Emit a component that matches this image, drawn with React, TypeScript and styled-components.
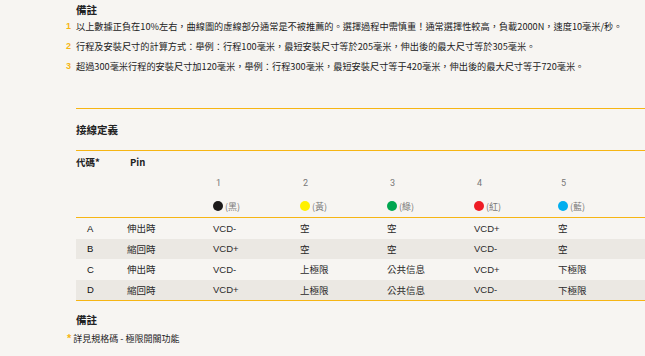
import * as React from "react";
import styled, { createGlobalStyle } from "styled-components";

const ORANGE = "#f6b514";
const CJK = `"Noto Sans CJK TC", "Noto Sans", sans-serif`;

const GlobalStyle = createGlobalStyle`
  html, body {
    margin: 0;
    padding: 0;
    background: #f7f5f2;
  }
  body {
    font-family: ${CJK};
    color: #222;
  }
`;

const Page = styled.div`
  width: 645px;
  height: 356px;
  overflow: hidden;
  padding-left: 76px;
  box-sizing: border-box;
`;

const Title = styled.div<{ $top: number }>`
  margin-top: ${(p) => p.$top}px;
  font-size: 10.5px;
  font-weight: 700;
  line-height: 12px;
  height: 12px;
`;

const NoteList = styled.div`
  margin-left: -10px;
`;

const NoteItem = styled.div`
  display: grid;
  grid-template-columns: 10px auto;
  font-size: 9.2px;
  line-height: 20px;
  height: 20px;
  white-space: nowrap;
`;

const Marker = styled.span`
  color: ${ORANGE};
  font-weight: 700;
  font-family: "Liberation Sans", sans-serif;
  font-size: 9px;
`;

const Divider = styled.div<{ $top?: number }>`
  margin-top: ${(p) => p.$top ?? 0}px;
  height: 1px;
  background: ${ORANGE};
`;

const SectionHead = styled.div`
  height: 41px;
  display: flex;
  align-items: center;
  font-size: 10.5px;
  font-weight: 700;
`;

const Grid = styled.div<{ $h: number; $shade?: boolean }>`
  display: grid;
  grid-template-columns: 11px 40px 86px 87px 87px 87px 84px 1fr;
  height: ${(p) => p.$h}px;
  align-items: center;
  background: ${(p) => (p.$shade ? "#ebe8e3" : "transparent")};
  white-space: nowrap;
`;

const HeadCell = styled.div<{ $shift?: number }>`
  font-size: 9.5px;
  font-weight: 700;
  margin-left: ${(p) => p.$shift ?? 0}px;
`;

const PinNo = styled.div`
  font-family: Roboto, sans-serif;
  font-size: 9px;
  color: #777;
  padding-left: 3px;
`;

const PinColour = styled.div`
  display: flex;
  align-items: center;
  gap: 2px;
  font-size: 9px;
  color: #777;
  padding-top: 2px;
`;

const Dot = styled.span<{ $c: string }>`
  width: 10px;
  height: 10px;
  border-radius: 50%;
  background: ${(p) => p.$c};
  display: inline-block;
`;

const Code = styled.div`
  font-family: "Liberation Sans", Arial, sans-serif;
  font-size: 9.5px;
  color: #111;
`;

const Cell = styled.div<{ $latin?: boolean }>`
  font-family: ${(p) => (p.$latin ? `"Liberation Sans", Arial, sans-serif` : CJK)};
  font-size: ${(p) => (p.$latin ? "9.5px" : "9.5px")};
  color: #2a2a2a;
`;

const FootNote = styled.div`
  margin-top: 6px;
  margin-left: -9px;
  display: flex;
  gap: 2px;
  font-size: 9px;
  line-height: 14px;
  height: 14px;
`;

const Star = styled.span`
  color: ${ORANGE};
  font-family: "Liberation Sans", sans-serif;
  font-size: 11px;
  font-weight: 700;
  position: relative;
  top: -1px;
`;

const notes = [
  "以上數據正負在10%左右，曲線圖的虛線部分通常是不被推薦的。選擇過程中需慎重！通常選擇性較高，負載2000N，速度10毫米/秒。",
  "行程及安裝尺寸的計算方式：舉例：行程100毫米，最短安裝尺寸等於205毫米，伸出後的最大尺寸等於305毫米。",
  "超過300毫米行程的安裝尺寸加120毫米，舉例：行程300毫米，最短安裝尺寸等于420毫米，伸出後的最大尺寸等于720毫米。",
];

const pins = [
  { c: "#1c1a1a", name: "黑" },
  { c: "#fff000", name: "黃" },
  { c: "#00a650", name: "綠" },
  { c: "#ee1c25", name: "紅" },
  { c: "#00aeef", name: "藍" },
];

const rows = [
  ["A", "伸出時", "VCD-", "空", "空", "VCD+", "空"],
  ["B", "縮回時", "VCD+", "空", "空", "VCD-", "空"],
  ["C", "伸出時", "VCD-", "上極限", "公共信息", "VCD+", "下極限"],
  ["D", "縮回時", "VCD+", "上極限", "公共信息", "VCD-", "下極限"],
];

export default function App() {
  return (
    <>
      <GlobalStyle />
      <Page>
        <Title $top={4}>備註</Title>
        <NoteList>
          {notes.map((n, i) => (
            <NoteItem key={i}>
              <Marker>{i + 1}</Marker>
              <span>{n}</span>
            </NoteItem>
          ))}
        </NoteList>

        <Divider $top={32} />
        <SectionHead>接線定義</SectionHead>
        <Divider />

        <Grid $h={22}>
          <span />
          <HeadCell $shift={-11}>代碼*</HeadCell>
          <HeadCell $shift={3}>Pin</HeadCell>
        </Grid>
        <Grid $h={20}>
          <span />
          <span />
          <span />
          {pins.map((p, i) => (
            <PinNo key={i}>{i + 1}</PinNo>
          ))}
        </Grid>
        <Grid $h={24}>
          <span />
          <span />
          <span />
          {pins.map((p) => (
            <PinColour key={p.name}>
              <Dot $c={p.c} />
              <span>({p.name})</span>
            </PinColour>
          ))}
        </Grid>
        <Divider />

        {rows.map((r, i) => (
          <Grid key={r[0]} $h={20.5} $shade={i % 2 === 1}>
            <span />
            <Code>{r[0]}</Code>
            <Cell>{r[1]}</Cell>
            {r.slice(2).map((v, j) => (
              <Cell key={j} $latin={v.startsWith("VCD")}>
                {v}
              </Cell>
            ))}
          </Grid>
        ))}
        <Divider />

        <Title $top={13}>備註</Title>
        <FootNote>
          <Star>*</Star>
          <span>詳見規格碼 - 極限開關功能</span>
        </FootNote>
      </Page>
    </>
  );
}
